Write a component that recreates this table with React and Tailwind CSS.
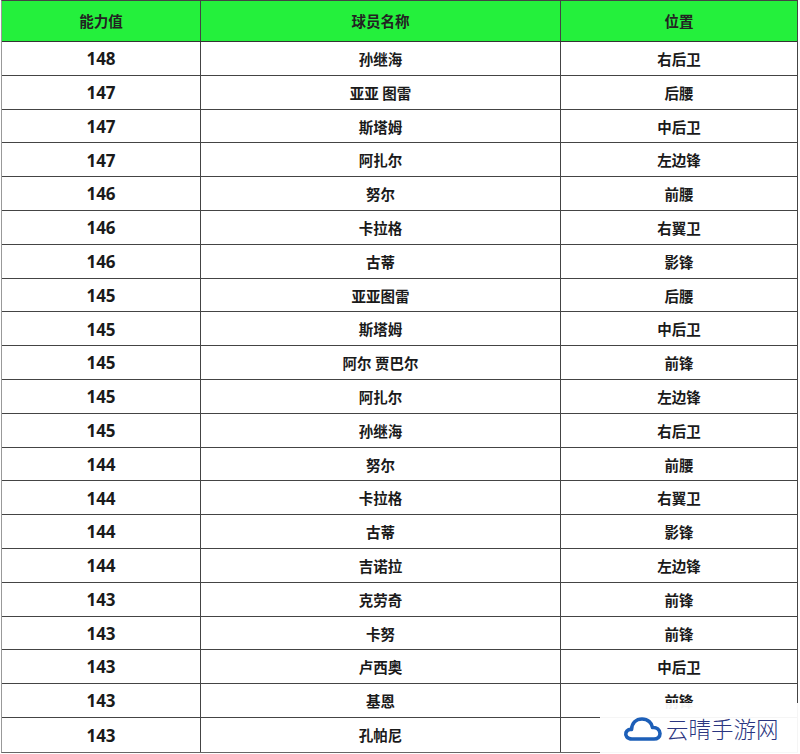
import React from 'react';

const rows = [
  ['148', '孙继海', '右后卫'],
  ['147', '亚亚 图雷', '后腰'],
  ['147', '斯塔姆', '中后卫'],
  ['147', '阿扎尔', '左边锋'],
  ['146', '努尔', '前腰'],
  ['146', '卡拉格', '右翼卫'],
  ['146', '古蒂', '影锋'],
  ['145', '亚亚图雷', '后腰'],
  ['145', '斯塔姆', '中后卫'],
  ['145', '阿尔 贾巴尔', '前锋'],
  ['145', '阿扎尔', '左边锋'],
  ['145', '孙继海', '右后卫'],
  ['144', '努尔', '前腰'],
  ['144', '卡拉格', '右翼卫'],
  ['144', '古蒂', '影锋'],
  ['144', '吉诺拉', '左边锋'],
  ['143', '克劳奇', '前锋'],
  ['143', '卡努', '前锋'],
  ['143', '卢西奥', '中后卫'],
  ['143', '基恩', '前锋'],
  ['143', '孔帕尼', ''],
];

const cjk = { fontFamily: '"Noto Sans CJK SC", "Noto Sans", sans-serif' };
const num = { fontFamily: '"Open Sans", "Noto Sans", sans-serif' };

const App = () => {
  return (
    <div className="relative w-[800px] h-[754px] bg-white overflow-hidden" style={cjk}>
      {/* table */}
      <div className="ml-[1px] w-[797px] border-l border-l-[#999] border-r border-r-[#444] border-t border-t-[#444] border-b border-b-[#666]">
        <div className="flex h-[41px] bg-[#24f03c] border-b border-[#333] text-[14.5px] font-bold text-[#222]">
          <div className="w-[199px] flex items-center justify-center border-r border-[#444]">能力值</div>
          <div className="w-[360px] flex items-center justify-center border-r border-[#444]">球员名称</div>
          <div className="flex-1 flex items-center justify-center">位置</div>
        </div>
        {rows.map((r, i) => (
          <div
            key={i}
            className={`flex h-[33.8px] text-[#1a1a1a] ${i < rows.length - 1 ? 'border-b border-[#444]' : ''}`}
          >
            <div className="w-[199px] flex items-center justify-center pt-[1px] border-r border-[#444] text-[17px] font-bold" style={num}>
              {r[0]}
            </div>
            <div className="w-[360px] flex items-center justify-center pt-[1px] border-r border-[#444] text-[14.5px] font-bold">
              {r[1]}
            </div>
            <div className="flex-1 flex items-center justify-center pt-[1px] text-[14.5px] font-bold">{r[2]}</div>
          </div>
        ))}
      </div>

      {/* watermark */}
      <div className="absolute left-[600px] top-[703px] w-[200px] h-[51px] bg-white/95 flex items-center pl-[23px] gap-[3px]">
        <svg width="40" height="28" viewBox="0 0 40 28" fill="none">
          <path
            d="M9 24 C4 24 2 20.5 3 17.5 C4 15 6.5 14 8.5 14.5 C9 8 13 4 19 4 C25 4 29 8 29.5 12.5 C33.5 12 37 14.5 37 18.5 C37 22 34.5 24 31 24 Z"
            stroke="#1d5fb8"
            strokeWidth="3.6"
            strokeLinejoin="round"
          />
        </svg>
        <span className="text-[22.5px] text-[#2a3580] leading-none" style={{ fontFamily: '"Noto Sans CJK SC", sans-serif', fontWeight: 300 }}>
          云晴手游网
        </span>
      </div>
    </div>
  );
};

export default App;
